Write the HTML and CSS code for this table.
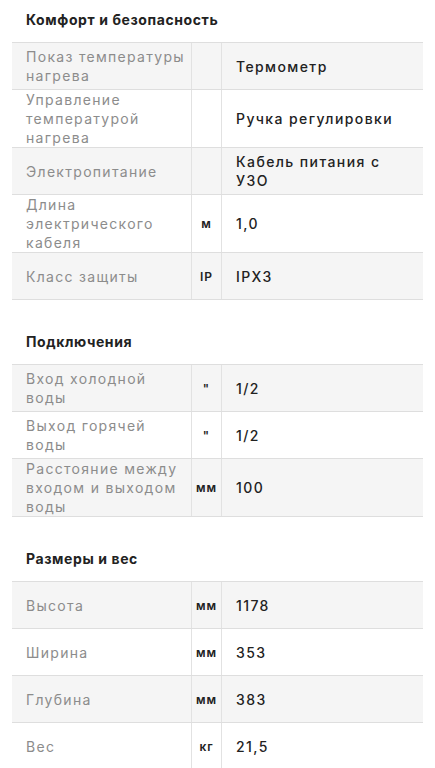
FILE: index.html
```html
<!DOCTYPE html>
<html lang="ru">
<head>
<meta charset="utf-8">
<link rel="stylesheet" href="styles.css">
</head>
<body>
<section class="group">
  <h2 class="group-title">Комфорт и безопасность</h2>
  <div class="spec">
    <div class="row"><div class="label">Показ температуры нагрева</div><div class="unit"></div><div class="value">Термометр</div></div>
    <div class="row"><div class="label">Управление температурой нагрева</div><div class="unit"></div><div class="value">Ручка регулировки</div></div>
    <div class="row"><div class="label">Электропитание</div><div class="unit"></div><div class="value">Кабель питания с УЗО</div></div>
    <div class="row"><div class="label">Длина электрического кабеля</div><div class="unit">м</div><div class="value">1,0</div></div>
    <div class="row"><div class="label">Класс защиты</div><div class="unit">IP</div><div class="value">IPX3</div></div>
  </div>
</section>
<section class="group">
  <h2 class="group-title">Подключения</h2>
  <div class="spec">
    <div class="row"><div class="label">Вход холодной воды</div><div class="unit">"</div><div class="value">1/2</div></div>
    <div class="row"><div class="label">Выход горячей воды</div><div class="unit">"</div><div class="value">1/2</div></div>
    <div class="row"><div class="label">Расстояние между входом и выходом воды</div><div class="unit">мм</div><div class="value">100</div></div>
  </div>
</section>
<section class="group">
  <h2 class="group-title">Размеры и вес</h2>
  <div class="spec">
    <div class="row"><div class="label">Высота</div><div class="unit">мм</div><div class="value">1178</div></div>
    <div class="row"><div class="label">Ширина</div><div class="unit">мм</div><div class="value">353</div></div>
    <div class="row"><div class="label">Глубина</div><div class="unit">мм</div><div class="value">383</div></div>
    <div class="row"><div class="label">Вес</div><div class="unit">кг</div><div class="value">21,5</div></div>
  </div>
</section>
</body>
</html>
```
FILE: styles.css
```css
* { box-sizing: border-box; }
html, body { margin: 0; padding: 0; background: #fff; }
body {
  font-family: "Inter", "Open Sans", sans-serif;
  color: #222;
  padding: 0 12px;
}
.group { padding-top: 11px; }
.group + .group { padding-top: 33px; }
.group-title {
  margin: 0 0 14px 14px;
  font-size: 14px;
  line-height: 17px;
  font-weight: 700;
  letter-spacing: 0.6px;
  color: #222;
}
.spec { border-top: 1px solid #dedede; }
.row {
  display: grid;
  grid-template-columns: 180px 30px 1fr;
  min-height: 47px;
  border-bottom: 1px solid #dedede;
}
.row:nth-child(odd) { background: #f5f5f5; }
.label, .unit, .value {
  display: flex;
  align-items: center;
  font-size: 14px;
  line-height: 19px;
  letter-spacing: 1.4px;
}
.label {
  padding: 0 4px 0 14px;
  color: #8c8c8c;
  letter-spacing: 1.3px;
  border-right: 1px solid #e2e2e2;
}
.unit {
  justify-content: center;
  font-weight: 600;
  font-size: 12px;
  letter-spacing: 1px;
  color: #222;
  border-right: 1px solid #e2e2e2;
}
.value {
  padding: 0 10px 0 14px;
  color: #222;
  font-weight: 500;
}
```
